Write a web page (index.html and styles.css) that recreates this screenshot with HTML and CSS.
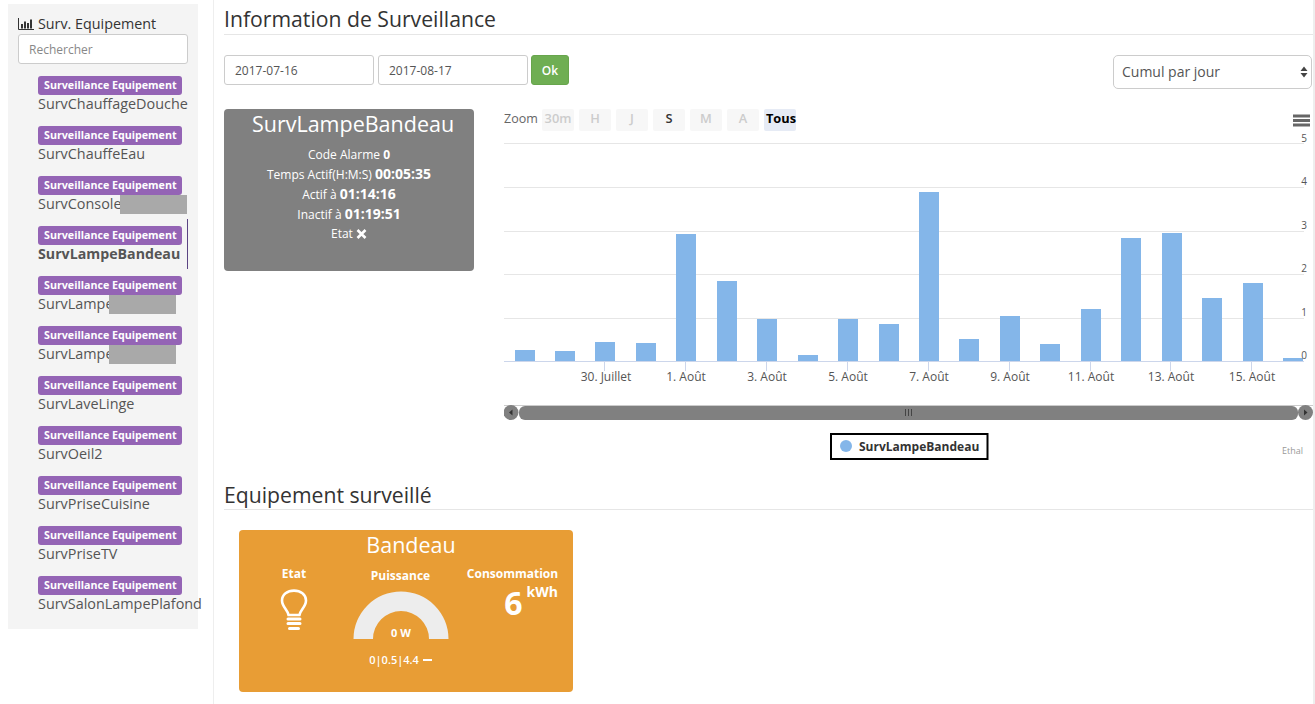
FILE: index.html
```html
<!DOCTYPE html>
<html lang="fr">
<head>
<meta charset="utf-8">
<title>Surveillance</title>
<link rel="stylesheet" href="styles.css">
</head>
<body>
<div class="page">
  <aside class="side">
    <div class="panel">
      <div class="panel-title">
        <svg class="bar-icon" width="16" height="12" viewBox="0 0 16 12"><path d="M0.5 0V11.5H16" fill="none" stroke="#333" stroke-width="1"/><path d="M3 6h2v4.5H3zM6 3.5h2v7H6zM9 5h2v5.5H9zM12 1.5h2v9h-2z" fill="#333"/></svg>
        <span>Surv. Equipement</span>
      </div>
      <input class="search" type="text" placeholder="Rechercher">
      <ul class="list">
        <li class="item"><span class="badge">Surveillance Equipement</span><span class="name">SurvChauffageDouche</span></li>
        <li class="item"><span class="badge">Surveillance Equipement</span><span class="name">SurvChauffeEau</span></li>
        <li class="item"><span class="badge">Surveillance Equipement</span><span class="name">SurvConsole</span><i class="redact redact-a"></i></li>
        <li class="item active"><span class="badge">Surveillance Equipement</span><span class="name">SurvLampeBandeau</span></li>
        <li class="item"><span class="badge">Surveillance Equipement</span><span class="name">SurvLampe</span><i class="redact redact-b"></i></li>
        <li class="item"><span class="badge">Surveillance Equipement</span><span class="name">SurvLampe</span><i class="redact redact-b"></i></li>
        <li class="item"><span class="badge">Surveillance Equipement</span><span class="name">SurvLaveLinge</span></li>
        <li class="item"><span class="badge">Surveillance Equipement</span><span class="name">SurvOeil2</span></li>
        <li class="item"><span class="badge">Surveillance Equipement</span><span class="name">SurvPriseCuisine</span></li>
        <li class="item"><span class="badge">Surveillance Equipement</span><span class="name">SurvPriseTV</span></li>
        <li class="item"><span class="badge">Surveillance Equipement</span><span class="name">SurvSalonLampePlafond</span></li>
      </ul>
    </div>
  </aside>
  <main class="main">
    <h1 class="heading top">Information de Surveillance</h1>
    <div class="toolbar">
      <input class="date" type="text" value="2017-07-16">
      <input class="date" type="text" value="2017-08-17">
      <button class="ok" type="button">Ok</button>
      <div class="select-wrap">
        <select class="select"><option>Cumul par jour</option></select>
        <svg class="select-arrows" width="8" height="12" viewBox="0 0 8 12"><path d="M4 0.5L7.5 5H0.5zM4 11.5L0.5 7H7.5z" fill="#444"/></svg>
      </div>
    </div>
    <div class="content">
      <section class="status">
        <div class="status-title">SurvLampeBandeau</div>
        <div class="status-line">Code Alarme <b class="small-b">0</b></div>
        <div class="status-line">Temps Actif(H:M:S) <b>00:05:35</b></div>
        <div class="status-line">Actif à <b>01:14:16</b></div>
        <div class="status-line">Inactif à <b>01:19:51</b></div>
        <div class="status-line">Etat <svg width="11" height="10" viewBox="0 0 11 10"><path d="M1.5 1L9.5 9M9.5 1L1.5 9" stroke="#fff" stroke-width="2.6" fill="none"/></svg></div>
      </section>
      <svg class="chart" width="809" height="355" viewBox="504 105 809 355">
        <g class="grid">
          <path d="M504 143.5H1304M504 187.5H1304M504 231.5H1304M504 274.5H1304M504 318.5H1304"/>
        </g>
        <g class="bars">
          <rect x="515" y="350" width="20" height="11"/>
          <rect x="555" y="351" width="20" height="10"/>
          <rect x="595" y="342" width="20" height="19"/>
          <rect x="636" y="343" width="20" height="18"/>
          <rect x="676" y="234" width="20" height="127"/>
          <rect x="717" y="281" width="20" height="80"/>
          <rect x="757" y="319" width="20" height="42"/>
          <rect x="798" y="355" width="20" height="6"/>
          <rect x="838" y="319" width="20" height="42"/>
          <rect x="879" y="324" width="20" height="37"/>
          <rect x="919" y="192" width="20" height="169"/>
          <rect x="959" y="339" width="20" height="22"/>
          <rect x="1000" y="316" width="20" height="45"/>
          <rect x="1040" y="344" width="20" height="17"/>
          <rect x="1081" y="309" width="20" height="52"/>
          <rect x="1121" y="238" width="20" height="123"/>
          <rect x="1162" y="233" width="20" height="128"/>
          <rect x="1202" y="298" width="20" height="63"/>
          <rect x="1243" y="283" width="20" height="78"/>
          <rect x="1283" y="358" width="20" height="3"/>
        </g>
        <path class="axis" d="M504 361.500H1304M604.500 362V371M685.500 362V371M766.500 362V371M847.500 362V371M928.500 362V371M1009.500 362V371M1090.500 362V371M1170.500 362V371M1251.500 362V371"/>
        <g class="y-labels">
          <text x="1307" y="142">5</text>
          <text x="1307" y="185">4</text>
          <text x="1307" y="229">3</text>
          <text x="1307" y="272">2</text>
          <text x="1307" y="316">1</text>
          <text x="1307" y="359">0</text>
        </g>
        <g class="x-labels">
          <text x="606" y="381">30. Juillet</text>
          <text x="686" y="381">1. Août</text>
          <text x="767" y="381">3. Août</text>
          <text x="848" y="381">5. Août</text>
          <text x="929" y="381">7. Août</text>
          <text x="1010" y="381">9. Août</text>
          <text x="1091" y="381">11. Août</text>
          <text x="1171" y="381">13. Août</text>
          <text x="1252" y="381">15. Août</text>
        </g>
        <text class="zoom-label" x="504" y="123">Zoom</text>
        <g class="range">
          <rect x="542" y="109" width="32" height="22" rx="2"/><text class="off" x="558" y="123">30m</text>
          <rect x="579" y="109" width="32" height="22" rx="2"/><text class="off" x="595" y="123">H</text>
          <rect x="616" y="109" width="32" height="22" rx="2"/><text class="off" x="632" y="123">J</text>
          <rect x="653" y="109" width="32" height="22" rx="2"/><text x="669" y="123">S</text>
          <rect x="690" y="109" width="32" height="22" rx="2"/><text class="off" x="706" y="123">M</text>
          <rect x="727" y="109" width="32" height="22" rx="2"/><text class="off" x="743" y="123">A</text>
          <rect class="on" x="764" y="109" width="32" height="22" rx="2"/><text class="on-t" x="781" y="123">Tous</text>
        </g>
        <path class="menu" d="M1293 114.500h17v3h-17zM1293 119h17v3h-17zM1293 123.500h17v3h-17z"/>
        <path class="nav-top" d="M504 405.500H1313"/>
        <rect class="nav" x="519" y="406" width="779" height="14" rx="6"/>
        <circle class="nav" cx="511" cy="412.500" r="7.500"/>
        <circle class="nav" cx="1305.500" cy="412.500" r="7.500"/>
        <path class="nav-arrow" d="M512.500 409.500V415.500L509 412.500zM1304 409.500V415.500L1307.500 412.500z"/>
        <path class="grip" d="M905.500 409V416M908.500 409V416M911.500 409V416"/>
        <rect class="legend-box" x="831" y="434" width="156.500" height="25"/>
        <circle class="legend-dot" cx="846" cy="446" r="6"/>
        <text class="legend-text" x="859" y="451">SurvLampeBandeau</text>
        <text class="credit" x="1303" y="454">Ethal</text>
      </svg>
    </div>
    <h2 class="heading sub">Equipement surveillé</h2>
    <section class="device">
      <div class="device-title">Bandeau</div>
      <div class="device-grid">
        <div class="cell">
          <div class="cell-label">Etat</div>
          <svg class="bulb" width="28" height="44" viewBox="0 0 28 44">
            <path d="M8.500 26C8 21 2 18 2 11.500C2 5.500 7.500 1.600 14 1.600C20.500 1.600 26 5.500 26 11.500C26 18 20 21 19.500 26Z" fill="none" stroke="#fff" stroke-width="2.600" stroke-linejoin="round"/>
            <path d="M8 30H20M8 34.500H20M9.500 39.500H18.500" stroke="#fff" stroke-width="3" stroke-linecap="round" fill="none"/>
          </svg>
        </div>
        <div class="cell">
          <div class="cell-label gauge-label">Puissance</div>
          <svg class="gauge" width="96" height="49" viewBox="0 0 96 49">
            <path class="gauge-arc" d="M0.500 48A47.500 47.500 0 0 1 95.500 48H76A28 28 0 0 0 20 48Z"/>
            <text class="gauge-text" x="48" y="46">0 W</text>
          </svg>
          <div class="gauge-range">0|0.5|4.4 <i class="dash"></i></div>
        </div>
        <div class="cell">
          <div class="cell-label">Consommation</div>
          <div class="energy"><span class="energy-val">6</span><span class="energy-unit">kWh</span></div>
        </div>
      </div>
    </section>
  </main>
</div>
</body>
</html>
```
FILE: styles.css
```css
* { box-sizing: border-box; }
html, body { margin: 0; padding: 0; height: 100%; overflow: hidden; }
body { font-family: "Open Sans", "Liberation Sans", sans-serif; font-size: 14px; color: #333; background: #fff; }
.page { display: flex; width: 1315px; height: 704px; border-right: 2px solid #eee; }
.side { width: 214px; flex: none; border-right: 1px solid #eee; padding: 4px 15px 0 8px; }
.panel { width: 190px; background: #f4f4f4; padding: 10px 10px 10px; }
.panel-title { display: flex; align-items: center; gap: 4px; height: 20px; font-size: 14.3px; line-height: 20px; color: #333; }
.bar-icon { flex: none; }
.search { display: block; width: 170px; height: 30px; padding: 0 10px; font: 12px "Open Sans", sans-serif; color: #555; background: #fff; border: 1px solid #ccc; border-radius: 3px; }
.search::placeholder { color: #888; opacity: 1; }
.list { list-style: none; margin: 5px 0 0; padding: 0; }
.item { position: relative; height: 50px; width: 170px; padding: 7px 0 0 20px; }
.item.active { border-right: 1px solid #5b4483; }
.badge { display: block; width: 144px; height: 19px; padding: 0 6px; border-radius: 3px; background: #9464b5; color: #fff; font-size: 10.7px; font-weight: 700; line-height: 19px; white-space: nowrap; }
.name { display: block; margin-top: -1px; font-size: 14.4px; line-height: 19px; color: #555; white-space: nowrap; }
.active .name { font-size: 14.2px; font-weight: 700; }
.redact { position: absolute; top: 26px; height: 19px; width: 67px; background: #a9a9a9; }
.redact-a { left: 102px; }
.redact-b { left: 91px; }
.main { flex: 1; min-width: 0; padding-left: 10px; }
.heading { margin: 0; height: 35px; padding-top: 5px; font-size: 21.2px; font-weight: 400; line-height: 29px; color: #333; border-bottom: 1px solid #e6e6e6; }
.heading.top { padding-top: 4px; }
.toolbar { display: flex; align-items: flex-start; margin-top: 20px; height: 34px; }
.date { width: 150px; height: 30px; margin-right: 4px; padding: 0 10px; font: 12px "Open Sans", sans-serif; color: #555; background: #fff; border: 1px solid #ccc; border-radius: 3px; }
.ok { width: 38px; height: 30px; margin-left: -1px; padding: 0; font: 600 12px "Open Sans", sans-serif; color: #fff; background: #6fae53; border: 1px solid #67a54c; border-radius: 3px; }
.select-wrap { position: relative; margin-left: auto; width: 200px; }
.select { display: block; width: 199px; height: 34px; padding: 0 8px 2px; font: 14px "Open Sans", sans-serif; color: #555; background: #fff; border: 1px solid #ccc; border-radius: 5px; appearance: none; }
.select-arrows { position: absolute; top: 11px; right: 5px; pointer-events: none; }
.content { display: flex; align-items: flex-start; margin-top: 16px; }
.status { width: 250px; height: 162px; margin: 4px 30px 0 0; flex: none; background: #808080; border-radius: 4px; color: #fff; text-align: center; }
.status-title { height: 30px; padding-left: 8px; font-size: 21.5px; line-height: 30px; margin-bottom: 6px; }
.status-line { height: 20px; font-size: 12px; line-height: 20px; }
.status-title + .status-line { height: 19px; }
.status-line b { font-size: 14px; }
.status-line b.small-b { font-size: 12px; }
.status-line svg { vertical-align: -1px; }
.chart { display: block; flex: none; font-family: "Open Sans", sans-serif; }
.grid path { stroke: #e6e6e6; stroke-width: 1; fill: none; }
.bars rect { fill: #84b6e9; }
.axis { stroke: #ccd6eb; stroke-width: 1; fill: none; }
.y-labels text { font-size: 10px; fill: #555; text-anchor: end; }
.x-labels text { font-size: 12px; fill: #555; text-anchor: middle; }
.zoom-label { font-size: 12.5px; fill: #666; }
.range rect { fill: #f7f7f7; }
.range rect.on { fill: #e6ebf5; }
.range text { font-size: 12.8px; font-weight: 600; fill: #333; text-anchor: middle; }
.range text.off { fill: #ccc; }
.range text.on-t { font-weight: 700; fill: #000; }
.menu { fill: #666; }
.nav-top { stroke: #ccc; stroke-width: 1; fill: none; }
.nav { fill: #808080; }
.nav-arrow { fill: #333; }
.grip { stroke: #444; stroke-width: 1; fill: none; }
.legend-box { fill: #fff; stroke: #000; stroke-width: 2; }
.legend-dot { fill: #84b6e9; }
.legend-text { font-size: 12px; font-weight: 700; fill: #333; }
.credit { font-size: 9px; fill: #999; text-anchor: end; }
.sub { margin-top: 18px; height: 32px; padding-top: 2px; }
.device { width: 334px; height: 162px; margin: 20px 0 0 15px; background: #e89d35; border-radius: 4px; color: #fff; }
.device-title { height: 30px; padding-left: 10px; font-size: 21.5px; line-height: 30px; text-align: center; }
.device-grid { display: grid; grid-template-columns: 110px 103px 121px; margin-top: 6px; text-align: center; }
.cell-label { font-size: 12px; font-weight: 700; line-height: 16px; }
.gauge-label { margin-top: 2px; }
.bulb { display: block; margin: 7px auto 0; }
.gauge { display: block; margin: 7px auto 0; }
.gauge-arc { fill: #ededed; }
.gauge-text { font-size: 11px; font-weight: 700; fill: #fff; text-anchor: middle; font-family: "Open Sans", sans-serif; }
.gauge-range { margin-top: 12px; font-size: 11px; font-weight: 600; line-height: 16px; }
.dash { display: inline-block; width: 9px; height: 2px; margin-left: 1px; background: #fff; vertical-align: 3px; }
.energy { display: flex; justify-content: flex-end; padding-right: 15px; gap: 4px; margin-top: 3px; }
.energy-val { font-size: 32px; font-weight: 700; line-height: 36px; }
.energy-unit { font-size: 14px; font-weight: 700; line-height: 20px; margin-top: -3px; }
```
